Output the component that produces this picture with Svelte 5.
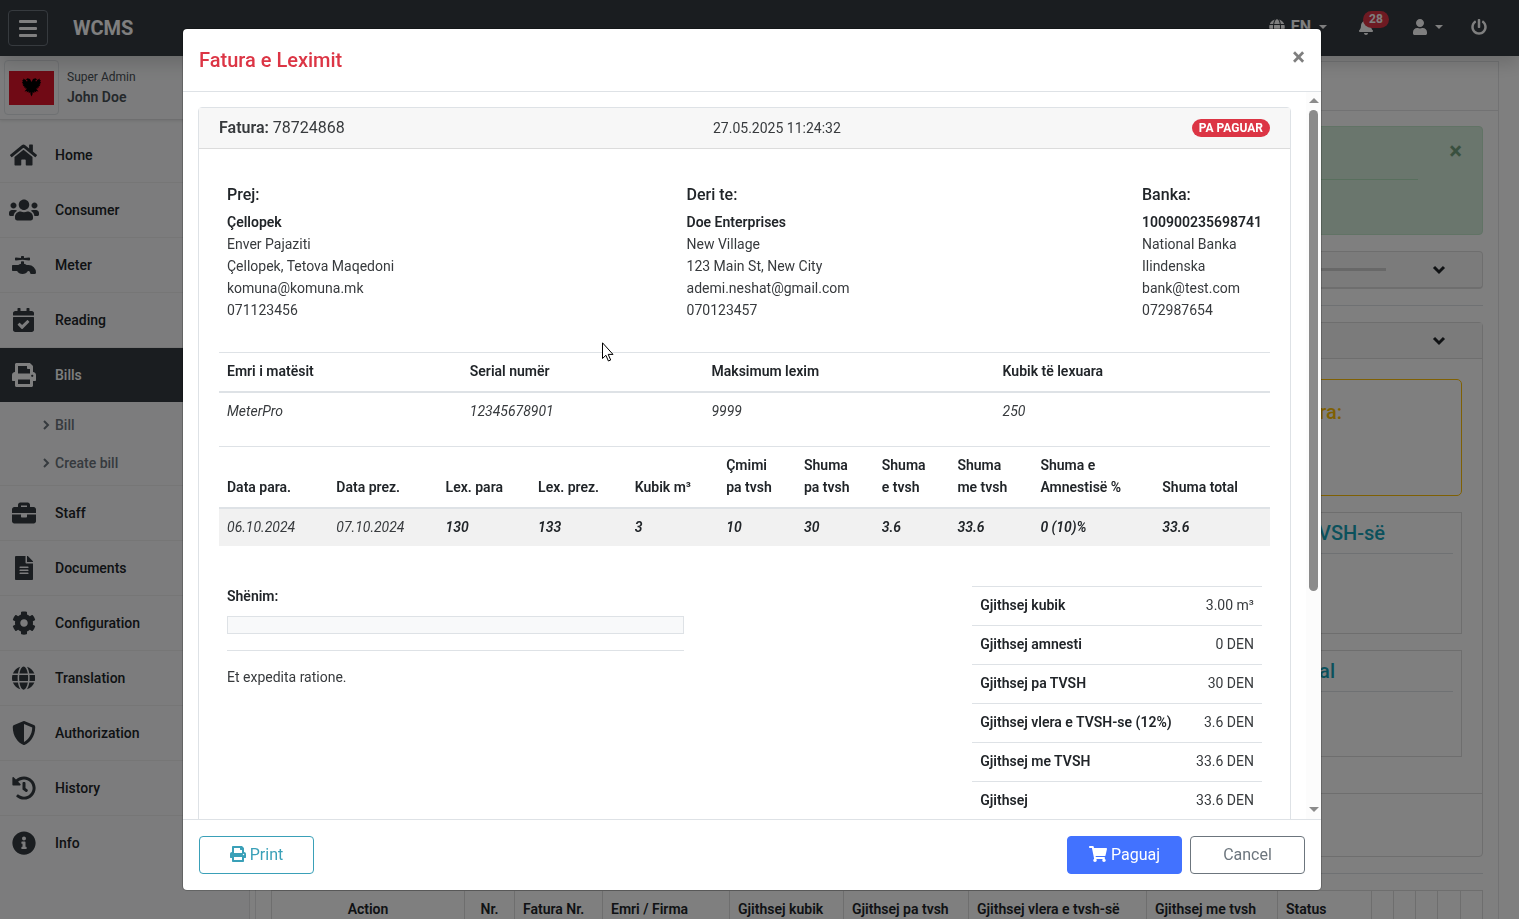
<script>
  const icons = {
    home: { w: 576, d: 'M280.37 148.26L96 300.11V464a16 16 0 0 0 16 16l112.06-.29a16 16 0 0 0 15.92-16V368a16 16 0 0 1 16-16h64a16 16 0 0 1 16 16v95.64a16 16 0 0 0 16 16.05L464 480a16 16 0 0 0 16-16V300L295.67 148.26a12.19 12.19 0 0 0-15.3 0zM571.6 251.47L488 182.56V44.05a12 12 0 0 0-12-12h-56a12 12 0 0 0-12 12v72.61L318.47 43a48 48 0 0 0-61 0L4.34 251.47a12 12 0 0 0-1.6 16.9l25.5 31A12 12 0 0 0 45.15 301l235.22-193.74a12.19 12.19 0 0 1 15.3 0L530.9 301a12 12 0 0 0 16.9-1.6l25.5-31a12 12 0 0 0-1.7-16.93z' },
    users: { w: 640, d: 'M96 224c35.3 0 64-28.7 64-64s-28.7-64-64-64-64 28.7-64 64 28.7 64 64 64zm448 0c35.3 0 64-28.7 64-64s-28.7-64-64-64-64 28.7-64 64 28.7 64 64 64zm32 32h-64c-17.6 0-33.5 7.1-45.1 18.6 40.3 22.1 68.9 62 75.1 109.4h66c17.7 0 32-14.3 32-32v-32c0-35.3-28.7-64-64-64zm-256 0c61.9 0 112-50.1 112-112S381.9 32 320 32 208 82.1 208 144s50.1 112 112 112zm76.8 32h-8.3c-20.8 10-43.9 16-68.5 16s-47.6-6-68.5-16h-8.3C179.6 288 128 339.6 128 403.2V432c0 26.5 21.5 48 48 48h288c26.5 0 48-21.5 48-48v-28.8c0-63.6-51.6-115.2-115.2-115.2zm-223.7-13.4C161.5 263.1 145.6 256 128 256H64c-35.3 0-64 28.7-64 64v32c0 17.7 14.3 32 32 32h65.9c6.3-47.4 34.9-87.3 75.2-109.4z' },
    faucet: { w: 512, d: 'M352,256H313.39c-15.71-13.44-35.46-23.07-57.39-28V180.44l-32-3.38-32,3.38V228c-21.93,5-41.68,14.6-57.39,28H16A16,16,0,0,0,0,272v96a16,16,0,0,0,16,16h92.79C129.38,421.73,173,448,224,448s94.62-26.27,115.21-64H352a32,32,0,0,1,32,32,32,32,0,0,0,32,32h64a32,32,0,0,0,32-32A160,160,0,0,0,352,256ZM81.59,159.91l142.41-15,142.41,15c9.42,1,17.59-6.81,17.59-16.8V112.89c0-10-8.17-17.8-17.59-16.81L256,107.74V80a16,16,0,0,0-16-16H208a16,16,0,0,0-16,16v27.74L81.59,96.08C72.17,95.09,64,102.9,64,112.89v30.22C64,153.1,72.17,160.91,81.59,159.91Z' },
    calendar: { w: 448, d: 'M436 160H12c-6.627 0-12-5.373-12-12v-36c0-26.51 21.49-48 48-48h48V12c0-6.627 5.373-12 12-12h40c6.627 0 12 5.373 12 12v52h128V12c0-6.627 5.373-12 12-12h40c6.627 0 12 5.373 12 12v52h48c26.51 0 48 21.49 48 48v36c0 6.627-5.373 12-12 12zM12 192h424c6.627 0 12 5.373 12 12v260c0 26.51-21.49 48-48 48H48c-26.51 0-48-21.49-48-48V204c0-6.627 5.373-12 12-12zm333.296 95.947l-28.169-28.398c-4.667-4.705-12.265-4.736-16.97-.068L194.12 364.665l-45.98-46.352c-4.667-4.705-12.266-4.736-16.971-.068l-28.397 28.17c-4.705 4.667-4.736 12.265-.068 16.97l82.601 83.269c4.667 4.705 12.265 4.736 16.97.068l142.953-141.805c4.705-4.667 4.736-12.265.068-16.97z' },
    print: { w: 512, d: 'M448 192V77.25c0-8.49-3.37-16.62-9.37-22.63L393.37 9.37c-6-6-14.14-9.37-22.63-9.37H96C78.33 0 64 14.33 64 32v160c-35.35 0-64 28.65-64 64v112c0 8.84 7.16 16 16 16h48v96c0 17.67 14.33 32 32 32h320c17.67 0 32-14.33 32-32v-96h48c8.84 0 16-7.16 16-16V256c0-35.35-28.65-64-64-64zm-64 256H128v-96h256v96zm0-224H128V64h192v48c0 8.84 7.16 16 16 16h48v96zm48 72c-13.25 0-24-10.75-24-24 0-13.26 10.75-24 24-24s24 10.74 24 24c0 13.25-10.75 24-24 24z' },
    briefcase: { w: 512, d: 'M320 336c0 8.84-7.16 16-16 16h-96c-8.84 0-16-7.16-16-16v-48H0v144c0 25.6 22.4 48 48 48h416c25.6 0 48-22.4 48-48V288H320v48zm144-208h-80V80c0-25.6-22.4-48-48-48H176c-25.6 0-48 22.4-48 48v48H48c-25.6 0-48 22.4-48 48v80h512v-80c0-25.6-22.4-48-48-48zm-144 0H192V96h128v32z' },
    file: { w: 384, d: 'M224 136V0H24C10.7 0 0 10.7 0 24v464c0 13.3 10.7 24 24 24h336c13.3 0 24-10.7 24-24V160H248c-13.2 0-24-10.8-24-24zm64 236c0 6.6-5.4 12-12 12H108c-6.6 0-12-5.4-12-12v-8c0-6.6 5.4-12 12-12h168c6.6 0 12 5.4 12 12v8zm0-64c0 6.6-5.4 12-12 12H108c-6.6 0-12-5.4-12-12v-8c0-6.6 5.4-12 12-12h168c6.6 0 12 5.4 12 12v8zm0-72v8c0 6.6-5.4 12-12 12H108c-6.6 0-12-5.4-12-12v-8c0-6.6 5.4-12 12-12h168c6.6 0 12 5.4 12 12zm96-114.1v6.1H256V0h6.1c6.4 0 12.5 2.5 17 7l97.9 98c4.5 4.5 7 10.6 7 16.9z' },
    cog: { w: 512, d: 'M487.4 315.7l-42.6-24.6c4.3-23.2 4.3-47 0-70.2l42.6-24.6c4.9-2.8 7.1-8.6 5.5-14-11.1-35.6-30-67.8-54.7-94.6-3.8-4.1-10-5.1-14.8-2.3L380.8 110c-17.9-15.4-38.5-27.3-60.8-35.1V25.8c0-5.6-3.9-10.5-9.4-11.7-36.7-8.2-74.3-7.8-109.2 0-5.5 1.2-9.4 6.1-9.4 11.7V75c-22.2 7.9-42.8 19.8-60.8 35.1L88.7 85.5c-4.9-2.8-11-1.9-14.8 2.3-24.7 26.7-43.6 58.9-54.7 94.6-1.7 5.4.6 11.2 5.5 14L67.3 221c-4.3 23.2-4.3 47 0 70.2l-42.6 24.6c-4.9 2.8-7.1 8.6-5.5 14 11.1 35.6 30 67.8 54.7 94.6 3.8 4.1 10 5.1 14.8 2.3l42.6-24.6c17.9 15.4 38.5 27.3 60.8 35.1v49.2c0 5.6 3.9 10.5 9.4 11.7 36.7 8.2 74.3 7.8 109.2 0 5.5-1.2 9.4-6.1 9.4-11.7v-49.2c22.2-7.9 42.8-19.8 60.8-35.1l42.6 24.6c4.9 2.8 11 1.9 14.8-2.3 24.7-26.7 43.6-58.9 54.7-94.6 1.5-5.5-.7-11.3-5.6-14.1zM256 336c-44.1 0-80-35.9-80-80s35.9-80 80-80 80 35.9 80 80-35.9 80-80 80z' },
    globe: { w: 496, d: 'M336.5 160C322 70.7 287.8 8 248 8s-74 62.7-88.5 152h177zM152 256c0 22.2 1.2 43.5 3.3 64h185.3c2.1-20.5 3.3-41.8 3.3-64s-1.2-43.5-3.3-64H155.3c-2.1 20.5-3.3 41.8-3.3 64zm324.7-96c-28.6-67.9-86.5-120.4-158-141.6 24.4 33.8 41.2 84.7 50 141.6h108zM177.2 18.4C105.8 39.6 47.8 92.1 19.3 160h108c8.7-56.9 25.5-107.8 49.9-141.6zM487.4 192H372.7c2.1 21 3.3 42.5 3.3 64s-1.2 43-3.3 64h114.6c5.5-20.5 8.6-41.8 8.6-64s-3.1-43.5-8.5-64zM120 256c0-21.5 1.2-43 3.3-64H8.6C3.2 212.5 0 233.8 0 256s3.2 43.5 8.6 64h114.6c-2-21-3.2-42.5-3.2-64zm39.5 96c14.5 89.3 48.7 152 88.5 152s74-62.7 88.5-152h-177zm159.3 141.6c71.4-21.2 129.4-73.7 158-141.6h-108c-8.8 56.9-25.6 107.8-50 141.6zM19.3 352c28.6 67.9 86.5 120.4 158 141.6-24.4-33.8-41.2-84.7-50-141.6h-108z' },
    shield: { w: 512, d: 'M466.5 83.7l-192-80a48.15 48.15 0 0 0-36.9 0l-192 80C27.7 91.1 16 108.6 16 128c0 198.5 114.5 335.7 221.5 380.3 11.8 4.9 25.1 4.9 36.9 0C360.1 472.6 496 349.3 496 128c0-19.4-11.7-36.9-29.5-44.3zM256.1 446.3l-.1-381 175.9 73.3c-3.3 151.4-82.1 261.1-175.8 307.7z' },
    history: { w: 512, d: 'M504 255.531c.253 136.64-111.18 248.372-247.82 248.468-59.015.042-113.223-20.53-155.822-54.911-11.077-8.94-11.905-25.541-1.839-35.607l11.267-11.267c8.609-8.609 22.353-9.551 31.891-1.984C173.062 425.135 212.781 440 256 440c101.705 0 184-82.311 184-184 0-101.705-82.311-184-184-184-48.814 0-93.149 18.969-126.068 49.932l50.754 50.754c10.08 10.08 2.941 27.314-11.313 27.314H24c-8.837 0-16-7.163-16-16V38.627c0-14.254 17.234-21.393 27.314-11.314l49.372 49.372C129.209 34.136 189.552 8 256 8c136.81 0 247.747 110.78 248 247.531zm-180.912 78.784l9.823-12.63c8.138-10.463 6.253-25.542-4.21-33.679L288 256.349V152c0-13.255-10.745-24-24-24h-16c-13.255 0-24 10.745-24 24v135.651l65.409 50.874c10.463 8.137 25.541 6.253 33.679-4.21z' },
    info: { w: 512, d: 'M256 8C119.043 8 8 119.083 8 256c0 136.997 111.043 248 248 248s248-111.003 248-248C504 119.083 392.957 8 256 8zm0 110c23.196 0 42 18.804 42 42s-18.804 42-42 42-42-18.804-42-42 18.804-42 42-42zm56 254c0 6.627-5.373 12-12 12h-88c-6.627 0-12-5.373-12-12v-24c0-6.627 5.373-12 12-12h12v-64h-12c-6.627 0-12-5.373-12-12v-24c0-6.627 5.373-12 12-12h64c6.627 0 12 5.373 12 12v100h12c6.627 0 12 5.373 12 12v24z' },
    bell: { w: 448, d: 'M224 512c35.32 0 63.97-28.65 63.97-64H160.03c0 35.35 28.65 64 63.97 64zm215.39-149.71c-19.32-20.76-55.47-51.99-55.47-154.29 0-77.7-54.48-139.9-127.94-155.16V32c0-17.67-14.32-32-31.98-32s-31.98 14.33-31.98 32v20.84C118.56 68.1 64.08 130.3 64.08 208c0 102.3-36.15 133.53-55.47 154.29-6 6.45-8.66 14.16-8.61 21.71.11 16.4 12.98 32 32.1 32h383.8c19.12 0 32-15.6 32.1-32 .05-7.55-2.61-15.27-8.61-21.71z' },
    user: { w: 448, d: 'M224 256c70.7 0 128-57.3 128-128S294.7 0 224 0 96 57.3 96 128s57.3 128 128 128zm89.6 32h-16.7c-22.2 10.2-46.9 16-72.9 16s-50.6-5.8-72.9-16h-16.7C60.2 288 0 348.2 0 422.4V464c0 26.5 21.5 48 48 48h352c26.5 0 48-21.5 48-48v-41.6c0-74.2-60.2-134.4-134.4-134.4z' },
    power: { w: 512, d: 'M400 54.1c63 45 104 118.6 104 201.9 0 136.8-110.8 247.7-247.5 248C120 504.3 8.2 393 8 256.4 7.9 173.1 48.9 99.3 111.8 54.2c11.7-8.3 28-4.8 35 7.7L162.6 90c5.9 10.5 3.1 23.8-6.6 31-41.5 30.8-68 79.6-68 134.9-.1 92.3 74.5 168.1 168 168.1 91.6 0 168.6-74.2 168-169.1-.3-51.8-24.7-101.8-68.1-134-9.7-7.2-12.4-20.5-6.5-30.9l15.8-28.1c7-12.4 23.2-16.1 34.8-7.8zM296 264V24c0-13.3-10.7-24-24-24h-32c-13.3 0-24 10.7-24 24v240c0 13.3 10.7 24 24 24h32c13.3 0 24-10.7 24-24z' },
    cart: { w: 576, d: 'M528.12 301.319l47.273-208C578.806 78.301 567.391 64 551.99 64H159.208l-9.166-44.81C147.758 8.021 137.93 0 126.529 0H24C10.745 0 0 10.745 0 24v16c0 13.255 10.745 24 24 24h69.883l70.248 343.435C147.325 417.1 136 435.222 136 456c0 30.928 25.072 56 56 56s56-25.072 56-56c0-15.674-6.447-29.835-16.824-40h209.647C430.447 426.165 424 440.326 424 456c0 30.928 25.072 56 56 56s56-25.072 56-56c0-22.172-12.888-41.332-31.579-50.405l5.517-24.276c3.413-15.018-8.002-29.319-23.403-29.319H218.117l-6.545-32h293.145c11.206 0 20.92-7.754 23.403-18.681z' }
  };

  const menu = [
    { icon: 'home', label: 'Home' },
    { icon: 'users', label: 'Consumer' },
    { icon: 'faucet', label: 'Meter' },
    { icon: 'calendar', label: 'Reading' },
    { icon: 'print', label: 'Bills', active: true, children: ['Bill', 'Create bill'] },
    { icon: 'briefcase', label: 'Staff' },
    { icon: 'file', label: 'Documents' },
    { icon: 'cog', label: 'Configuration' },
    { icon: 'globe', label: 'Translation' },
    { icon: 'shield', label: 'Authorization' },
    { icon: 'history', label: 'History' },
    { icon: 'info', label: 'Info' }
  ];

  const parties = [
    { title: 'Prej:', name: 'Çellopek', lines: ['Enver Pajaziti', 'Çellopek, Tetova Maqedoni', 'komuna@komuna.mk', '071123456'] },
    { title: 'Deri te:', name: 'Doe Enterprises', lines: ['New Village', '123 Main St, New City', 'ademi.neshat@gmail.com', '070123457'] },
    { title: 'Banka:', name: '100900235698741', lines: ['National Banka', 'Ilindenska', 'bank@test.com', '072987654'] }
  ];

  const meter = [
    { head: 'Emri i matësit', value: 'MeterPro', width: 23.1 },
    { head: 'Serial numër', value: '12345678901', width: 23 },
    { head: 'Maksimum lexim', value: '9999', width: 27.7 },
    { head: 'Kubik të lexuara', value: '250', width: 26.2 }
  ];

  const items = [
    { head: ['Data para.'], value: '06.10.2024', width: 10.4 },
    { head: ['Data prez.'], value: '07.10.2024', width: 10.4 },
    { head: ['Lex. para'], value: '130', width: 8.8, bold: true },
    { head: ['Lex. prez.'], value: '133', width: 9.2, bold: true },
    { head: ['Kubik m³'], value: '3', width: 8.7, bold: true },
    { head: ['Çmimi', 'pa tvsh'], value: '10', width: 7.4, bold: true },
    { head: ['Shuma', 'pa tvsh'], value: '30', width: 7.4, bold: true },
    { head: ['Shuma', 'e tvsh'], value: '3.6', width: 7.2, bold: true },
    { head: ['Shuma', 'me tvsh'], value: '33.6', width: 7.9, bold: true },
    { head: ['Shuma e', 'Amnestisë %'], value: '0 (10)%', width: 11.6, bold: true },
    { head: ['Shuma total'], value: '33.6', width: 11, bold: true }
  ];

  const totals = [
    ['Gjithsej kubik', '3.00 m³'],
    ['Gjithsej amnesti', '0 DEN'],
    ['Gjithsej pa TVSH', '30 DEN'],
    ['Gjithsej vlera e TVSH-se (12%)', '3.6 DEN'],
    ['Gjithsej me TVSH', '33.6 DEN'],
    ['Gjithsej', '33.6 DEN']
  ];

  const billColumns = [
    ['Action', 193], ['Nr.', 50], ['Fatura Nr.', 88], ['Emri / Firma', 127],
    ['Gjithsej kubik', 114], ['Gjithsej pa tvsh', 125], ['Gjithsej vlera e tvsh-së', 178],
    ['Gjithsej me tvsh', 131], ['Status', 94], ['', 22], ['', 22], ['', 22], ['', 23], ['', 22]
  ];
  const billTotal = billColumns.reduce((sum, c) => sum + c[1], 0);
</script>

{#snippet icon(name)}
  <svg class="fa" viewBox="0 0 {icons[name].w} 512" aria-hidden="true"><path d={icons[name].d} /></svg>
{/snippet}

{#snippet chevron()}
  <svg class="chevron" viewBox="0 0 14 10" aria-hidden="true"><path d="M2 2l5 5 5-5" /></svg>
{/snippet}

<div class="page">
  <header class="navbar">
    <button class="toggler" aria-label="Menu"><span></span><span></span><span></span></button>
    <a class="brand" href="#home">WCMS</a>
    <nav class="tools">
      <button class="tool lang">{@render icon('globe')} EN <i class="caret"></i></button>
      <button class="tool bell" aria-label="Notifications">{@render icon('bell')}<span class="count">28</span></button>
      <button class="tool account" aria-label="Account">{@render icon('user')}<i class="caret"></i></button>
      <button class="tool" aria-label="Log out">{@render icon('power')}</button>
    </nav>
  </header>

  <div class="columns">
    <aside class="sidebar">
      <div class="profile">
        <div class="thumb">
          <svg viewBox="0 0 45 34" aria-hidden="true">
            <rect width="45" height="34" fill="#e0152a" />
            <path
              fill="#000"
              d="M22.500 11l-1.500-3-2.500-.8-1.700 1.300 1.700.8-.5 1.500-1.500-2-2.500-1.200.5 1.500-1.500.2 1 1.300-1.200.6 1.300 1-1 .9 1.500.7-.8 1.100 1.700.3-.6 1.300 1.700-.1-.3 1.400 1.700-.4-2.500 3 2.500-.5-.3 1.500 1.800-1.100.3 2 1.500-1.300.2 2.200 1 2.300 1-2.300.2-2.200 1.500 1.300.3-2 1.800 1.100-.3-1.500 2.500.5-2.500-3 1.700.4-.3-1.400 1.700.1-.6-1.300 1.700-.3-.8-1.100 1.500-.7-1-.9 1.300-1-1.200-.6 1-1.300-1.500-.2.5-1.500-2.500 1.200-1.500 2-.5-1.500 1.700-.8-1.700-1.300-2.500.8z"
            />
          </svg>
        </div>
        <div class="who">
          <small>Super Admin</small>
          <strong>John Doe</strong>
        </div>
      </div>
      <ul class="menu">
        {#each menu as item}
          <li>
            <a class="item" class:active={item.active} href="#{item.label}">
              <span class="pic">{@render icon(item.icon)}</span>{item.label}
            </a>
            {#if item.children}
              <ul class="submenu">
                {#each item.children as child}
                  <li><a href="#{child}"><svg viewBox="0 0 7 10" aria-hidden="true"><path d="M1 1l4 4-4 4" /></svg>{child}</a></li>
                {/each}
              </ul>
            {/if}
          </li>
        {/each}
      </ul>
    </aside>

    <main class="content">
      <div class="crumbs"></div>
      <div class="inner">
        <div class="alert">
          <button class="close" aria-label="Dismiss">×</button>
          <hr />
        </div>
        <div class="filter">
          <div class="bar"></div>
          {@render chevron()}
        </div>
        <hr />
        <section class="panel">
          <div class="panel-head">{@render chevron()}</div>
          <div class="panel-body">
            <div class="tile warn"><h5>Fatura:</h5></div>
            <div class="tile sum"><h5 class="vat">TVSH-së</h5><hr /></div>
            <div class="tile total"><h5>Total</h5><hr /></div>
          </div>
          <div class="panel-foot"></div>
        </section>
        <hr />
        <table class="bills">
          <colgroup>
            {#each billColumns as col}<col style:width="{col[1] / billTotal * 100}%" />{/each}
          </colgroup>
          <thead>
            <tr>{#each billColumns as col}<th>{col[0]}</th>{/each}</tr>
          </thead>
        </table>
      </div>
    </main>
  </div>
</div>

<div class="backdrop">
  <div class="modal" role="dialog" aria-labelledby="modal-title">
    <div class="modal-header">
      <h5 id="modal-title">Fatura e Leximit</h5>
      <button class="close" aria-label="Close">×</button>
    </div>

    <div class="modal-body">
      <div class="scroll">
        <div class="card">
          <div class="card-header">
            <span class="number"><b>Fatura:</b> 78724868</span>
            <span>27.05.2025 11:24:32</span>
            <span class="badge">PA PAGUAR</span>
          </div>
          <div class="card-body">
            <div class="parties">
              {#each parties as p}
                <div>
                  <h6>{p.title}</h6>
                  <div><b>{p.name}</b></div>
                  {#each p.lines as line}<div>{line}</div>{/each}
                </div>
              {/each}
            </div>

            <table class="grid">
              <colgroup>{#each meter as m}<col style:width="{m.width}%" />{/each}</colgroup>
              <thead><tr>{#each meter as m}<th>{m.head}</th>{/each}</tr></thead>
              <tbody><tr>{#each meter as m}<td>{m.value}</td>{/each}</tr></tbody>
            </table>

            <table class="grid striped">
              <colgroup>{#each items as it}<col style:width="{it.width}%" />{/each}</colgroup>
              <thead>
                <tr>
                  {#each items as it}
                    <th>{#each it.head as line}<div>{line}</div>{/each}</th>
                  {/each}
                </tr>
              </thead>
              <tbody><tr>{#each items as it}<td class:bold={it.bold}>{it.value}</td>{/each}</tr></tbody>
            </table>

            <div class="bottom">
              <div class="notes">
                <b>Shënim:</b>
                <div class="note-box"></div>
                <hr />
                <p>Et expedita ratione.</p>
              </div>
              <table class="totals">
                <tbody>
                  {#each totals as [label, value]}
                    <tr><th>{label}</th><td>{value}</td></tr>
                  {/each}
                </tbody>
              </table>
            </div>
          </div>
        </div>
      </div>
      <div class="scrollbar">
        <i class="up"></i>
        <div class="track"><div class="thumb-bar"></div></div>
        <i class="down"></i>
      </div>
    </div>

    <div class="modal-footer">
      <button class="btn info">{@render icon('print')} Print</button>
      <button class="btn primary">{@render icon('cart')} Paguaj</button>
      <button class="btn secondary">Cancel</button>
    </div>
  </div>
</div>

<svg class="cursor" viewBox="0 0 12 20" aria-hidden="true"><path d="M.5.8v15.700l3.400-3.200 2.500 5.700 2.300-1-2.500-5.600h4.800z" /></svg>

<style>
  :global(body) {
    font-family: Roboto, "Liberation Sans", sans-serif;
    font-size: 14px;
    line-height: 22px;
    color: #212529;
    overflow: hidden;
  }
  :global(*) { box-sizing: border-box; }
  button {
    font: inherit;
    background: none;
    border: 0;
    padding: 0;
    cursor: pointer;
  }
  a { color: inherit; text-decoration: none; }
  b { font-weight: 600; }
  h5, h6, p, ul { margin: 0; padding: 0; }
  h5 { font-size: 20px; font-weight: 500; line-height: 24px; }
  h6 { font-size: 16px; font-weight: 500; line-height: 20px; margin-bottom: 6px; }
  ul { list-style: none; }
  hr { border: 0; border-top: 1px solid #dee2e6; margin: 16px 0; }
  table { border-collapse: collapse; }
  .fa { height: 1em; fill: currentColor; vertical-align: -2px; }

  .page {
    height: 100vh;
    display: flex;
    flex-direction: column;
    overflow: hidden;
    background: #fff;
  }
  .navbar {
    height: 56px;
    flex: none;
    display: flex;
    align-items: center;
    padding: 0 32px 0 8px;
    background: #343a40;
    color: #fff;
    box-shadow: 0 8px 16px rgba(0, 0, 0, .15);
    z-index: 1;
  }
  .toggler {
    width: 40px;
    height: 36px;
    border: 1px solid #6c757d;
    border-radius: 4px;
    display: flex;
    flex-direction: column;
    align-items: center;
    justify-content: center;
    gap: 4px;
  }
  .toggler span { width: 18px; height: 3px; border-radius: 1px; background: #fff; }
  .brand { margin-left: 25px; font-size: 20px; font-weight: 700; }
  .tools { margin-left: auto; display: flex; align-items: center; padding-bottom: 2px; }
  .tool { display: flex; align-items: center; color: #fff; font-size: 16px; font-weight: 500; }
  .tool .fa { width: 16px; }
  .lang { gap: 6px; font-weight: 700; }
  .caret {
    border: 4px solid transparent;
    border-top-color: #fff;
    border-bottom: 0;
    margin-left: 2px;
  }
  .bell { margin-left: 31px; position: relative; }
  .count {
    position: absolute;
    left: 5px;
    top: -8px;
    padding: 0 6px;
    border-radius: 10px;
    background: #dc3545;
    font-size: 12px;
    line-height: 17px;
    font-weight: 700;
  }
  .account { margin-left: 38px; gap: 5px; }
  .account + .tool { margin-left: 28px; }

  .columns { flex: 1; display: flex; min-height: 0; }
  .sidebar { width: 250px; flex: none; background: #f8f9fa; border-right: 1px solid #e2e3e5; }
  .profile {
    height: 64px;
    display: flex;
    align-items: center;
    padding: 0 4px;
    border-bottom: 1px solid #dcdddf;
    box-shadow: 0 1px 3px rgba(0, 0, 0, .1);
  }
  .thumb {
    width: 55px;
    height: 55px;
    border: 1px solid #dee2e6;
    border-radius: 4px;
    padding: 4px;
    display: flex;
    align-items: center;
  }
  .thumb svg { width: 100%; }
  .who { margin-left: 8px; padding-bottom: 1px; color: #495057; line-height: 20px; }
  .who small, .who strong { display: block; }
  .who small { font-size: 12px; }
  .who strong { font-weight: 600; }
  .menu { padding-top: 8px; font-weight: 500; }
  .menu > li { border-bottom: 1px solid #ececed; }
  .menu > li:last-child { border-bottom: 0; }
  .item { height: 54px; display: flex; align-items: center; color: #212529; }
  .pic { width: 31px; margin: 0 16px 0 8px; display: flex; justify-content: center; font-size: 24px; color: #343a40; }
  .active { background: #343a40; color: #fff; }
  .active .pic { color: #fff; }
  .submenu { padding: 4px 0 3px; }
  .submenu a { height: 38px; display: flex; align-items: center; gap: 5px; padding-left: 43px; color: #6c757d; }
  .submenu svg { width: 7px; height: 10px; fill: none; stroke: #6c757d; stroke-width: 2; }

  .content { flex: 1; min-width: 0; margin: 5px 20px 0 5px; border: 1px solid #e4e5e7; border-bottom: 0; }
  .crumbs { height: 49px; border-bottom: 1px solid #e4e5e7; }
  .inner { padding: 15px; }
  .alert {
    height: 109px;
    padding: 10px 64px 0 20px;
    background: #d4edda;
    border: 1px solid #c3e6cb;
    border-radius: 4px;
    position: relative;
  }
  .alert hr { border-color: #b1dfbb; margin: 42px 0 0; }
  .close { font-size: 24px; font-weight: 700; line-height: 24px; color: #000; opacity: .5; }
  .alert .close { position: absolute; right: 20px; top: 12px; color: #155724; }
  .filter {
    height: 38px;
    margin-top: 16px;
    display: flex;
    align-items: center;
    padding-right: 36px;
    gap: 46px;
    background: #f7f7f7;
    border: 1px solid #dcdcdc;
    border-bottom-width: 2px;
    border-radius: 4px;
  }
  .bar { flex: 1; height: 3px; background: #d0d0d0; }
  .chevron { width: 14px; height: 10px; fill: none; stroke: #212529; stroke-width: 3; }
  .panel { border: 1px solid #dcdcdc; border-radius: 4px; }
  .panel-head {
    height: 36px;
    display: flex;
    align-items: center;
    justify-content: flex-end;
    padding-right: 36px;
    background: #f7f7f7;
    border-bottom: 1px solid #dcdcdc;
  }
  .panel-body { padding: 20px 20px 36px; display: flex; flex-direction: column; gap: 16px; text-align: right; }
  .panel-foot { height: 63px; border-top: 1px solid #dcdcdc; }
  .tile { border: 1px solid #dcdcdc; }
  .tile hr { margin: 8px 8px 0; }
  .tile h5 { color: #17a2b8; padding: 8px 126px 0 0; }
  .tile h5.vat { padding-right: 76px; }
  .warn { height: 117px; border-color: #ffc107; border-radius: 5px; }
  .warn h5 { color: #ffc107; padding: 20px 119px 0 0; }
  .sum { height: 122px; }
  .total { height: 107px; }
  .bills { width: 100%; table-layout: fixed; }
  .bills th {
    height: 38px;
    padding: 0 8px 2px;
    border: 1px solid #dcdcdc;
    text-align: left;
    white-space: nowrap;
    font-weight: 600;
  }
  .bills th:first-child, .bills th:nth-child(2) { text-align: center; }

  .backdrop {
    position: fixed;
    inset: 0;
    z-index: 2;
    padding: 28px 15px 28px 0;
    background: rgba(0, 0, 0, .5);
    display: flex;
    justify-content: center;
  }
  .modal {
    width: 100%;
    max-width: 1140px;
    display: flex;
    flex-direction: column;
    background: #fff;
    background-clip: padding-box;
    border: 1px solid rgba(0, 0, 0, .2);
    border-radius: 5px;
  }
  .modal-header {
    height: 63px;
    flex: none;
    display: flex;
    align-items: center;
    justify-content: space-between;
    padding: 0 16px;
    border-bottom: 1px solid #dee2e6;
  }
  .modal-header h5 { color: #dc3545; }
  .modal-header .close { margin-bottom: 6px; }
  .modal-body { flex: 1; min-height: 0; display: flex; }
  .scroll { flex: 1; padding: 15px; overflow: hidden; }
  .scrollbar {
    width: 15px;
    display: flex;
    flex-direction: column;
    align-items: center;
    padding: 6px 0 7px;
    background: #fcfcfc;
  }
  .up, .down { border: 5px solid transparent; }
  .up { border-top: 0; border-bottom-color: #8b8b8b; }
  .down { border-bottom: 0; border-top-color: #8b8b8b; }
  .track { flex: 1; width: 9px; padding: 7px 0 10px; }
  .thumb-bar { height: 70%; border-radius: 5px; background: #8b8b8b; }

  .card { border: 1px solid #dee2e6; border-radius: 4px; min-height: 900px; }
  .card-header {
    display: grid;
    grid-template-columns: 47% 1fr auto;
    align-items: center;
    height: 41px;
    padding: 0 20px;
    background: #f7f7f7;
    border-bottom: 1px solid #dcdcdc;
    color: #373a3d;
  }
  .number { font-size: 16px; }
  .badge {
    padding: 0 7px;
    border-radius: 10px;
    background: #dc3545;
    color: #fff;
    font-size: 12px;
    line-height: 18px;
    font-weight: 700;
  }
  .card-body { padding: 20px; color: #373a3d; }
  .card-body b, .card-body h6, .card-body th { color: #212529; }
  .parties { display: flex; justify-content: space-between; padding: 16px 8px 31px; }

  th { font-weight: 600; text-align: left; }
  .grid { width: 100%; table-layout: fixed; border-collapse: separate; border-spacing: 0; margin-bottom: 16px; }
  .grid th { padding: 7px 8px 9px; vertical-align: bottom; white-space: nowrap; border-top: 1px solid #dee2e6; border-bottom: 2px solid #dee2e6; }
  .grid td { padding: 7px 8px 8px; font-style: italic; }
  .grid td.bold { font-weight: 600; color: #212529; }
  .striped td { background: #f1f1f1; }

  .bottom { display: flex; justify-content: space-between; align-items: flex-start; padding: 24px 8px 0; }
  .notes { width: 44.2%; line-height: 20px; }
  .note-box { height: 18px; margin-top: 10px; border: 1px solid #dee2e6; background: #f8f9fa; }
  .totals { width: 28%; }
  .totals tr { border-top: 1px solid #dee2e6; }
  .totals th, .totals td { padding: 7px 8px 9px; white-space: nowrap; }
  .totals td { text-align: right; }

  .modal-footer {
    height: 71px;
    flex: none;
    display: flex;
    align-items: center;
    gap: 8px;
    padding: 0 16px;
    border-top: 1px solid #dee2e6;
  }
  .btn {
    width: 115px;
    height: 38px;
    border: 1px solid;
    border-radius: 4px;
    font-size: 16px;
  }
  .info { color: #3aa0b8; margin-right: auto; }
  .primary { background: #4272ff; border-color: #4272ff; color: #fff; }
  .secondary { color: #6c757d; }

  .cursor {
    position: fixed;
    left: 602px;
    top: 342px;
    width: 12px;
    height: 20px;
    z-index: 3;
    fill: #fff;
    stroke: #000;
    stroke-width: 1;
  }
</style>
